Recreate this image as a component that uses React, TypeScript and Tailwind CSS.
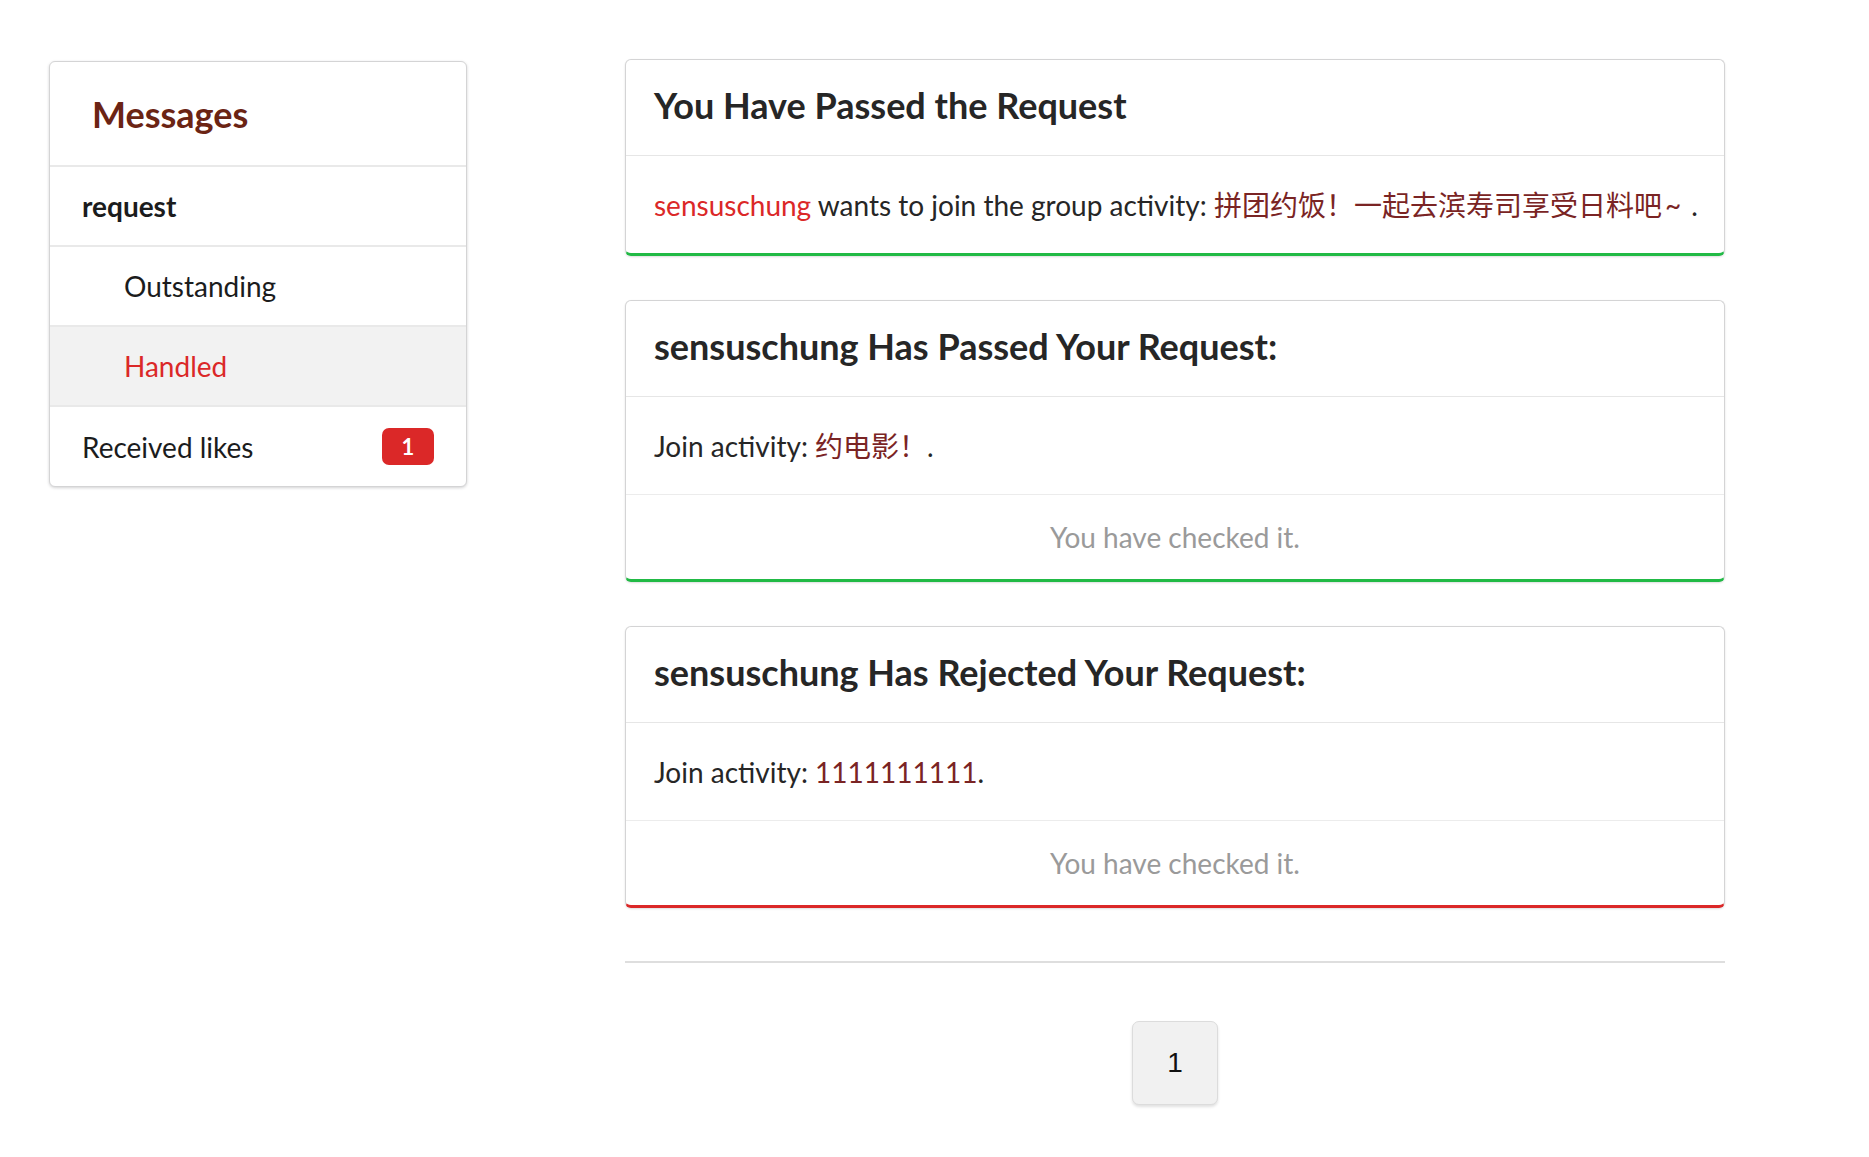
import React from 'react';

type Status = 'green' | 'red';

interface MessageCardProps {
  title: string;
  status: Status;
  children: React.ReactNode;
  checked?: boolean;
}

const font = { fontFamily: 'Lato, "Noto Sans CJK SC", sans-serif' };

const MessageCard: React.FC<MessageCardProps> = ({ title, status, children, checked }) => {
  const bottom = status === 'green' ? 'border-b-[#21ba45]' : 'border-b-[#db2828]';
  return (
    <div
      className={`bg-white border border-[#d4d4d5] border-b-[3px] ${bottom} rounded-[6px] shadow-[0_1px_2px_rgba(34,36,38,0.15)]`}
    >
      <div className="h-[96px] flex items-center px-[28px] pb-[6px] border-b border-[#e6e6e6]">
        <h2 className="text-[36px] font-bold text-[#262626] leading-none">{title}</h2>
      </div>
      <div className="h-[97px] flex items-center px-[28px] text-[28px] text-[#262626]">
        <p className="whitespace-nowrap">{children}</p>
      </div>
      {checked && (
        <div className="h-[85px] flex items-center justify-center border-t border-[#ececec] text-[28px] text-[#9a9a9a]">
          You have checked it.
        </div>
      )}
    </div>
  );
};

const Sidebar: React.FC = () => {
  return (
    <div className="w-[418px] mt-[2px] self-start bg-white border border-[#d4d4d5] rounded-[6px] shadow-[0_1px_3px_rgba(34,36,38,0.2)] overflow-hidden">
      <div className="h-[105px] flex items-center pl-[42px] border-b-2 border-[#e9e9e9]">
        <h1 className="text-[36px] font-bold text-[#6b2414] leading-none">Messages</h1>
      </div>
      <div className="h-[80px] flex items-center pl-[32px] border-b-2 border-[#e9e9e9] text-[28px] font-bold text-[#1b1c1d]">
        request
      </div>
      <div className="h-[80px] flex items-center pl-[74px] border-b-2 border-[#e9e9e9] text-[28px] text-[#1b1c1d]">
        Outstanding
      </div>
      <div className="h-[80px] flex items-center pl-[74px] border-b-2 border-[#e9e9e9] bg-[#f2f2f2] text-[28px] text-[#db2828]">
        Handled
      </div>
      <div className="h-[79px] flex items-center justify-between pl-[32px] pr-[32px] text-[28px] text-[#1b1c1d]">
        <span>Received likes</span>
        <span className="w-[52px] h-[37px] rounded-[7px] bg-[#db2828] text-white text-[22px] font-bold flex items-center justify-center">
          1
        </span>
      </div>
    </div>
  );
};

export default function App() {
  return (
    <div className="min-h-[1157px] bg-white" style={font}>
      <div className="flex pt-[59px] pl-[49px] gap-[158px]">
        <Sidebar />
        <div className="w-[1100px] flex flex-col">
          <div className="flex flex-col gap-[44px]">
            <MessageCard title="You Have Passed the Request" status="green">
              <span className="text-[#db2828]">sensuschung</span> wants to join the group activity:{' '}
              <span className="text-[#7a2424]">
                拼团约饭！一起去滨寿司享受日料吧
                <span className="inline-block w-[0.8em] text-center">~</span>
              </span>
              <span className="ml-[7px]">.</span>
            </MessageCard>
            <MessageCard title="sensuschung Has Passed Your Request:" status="green" checked>
              Join activity: <span className="text-[#7a2424]">约电影！</span>.
            </MessageCard>
            <MessageCard title="sensuschung Has Rejected Your Request:" status="red" checked>
              Join activity: <span className="text-[#7a2424]">1111111111</span>.
            </MessageCard>
          </div>
          <div className="mt-[53px] border-t-2 border-[#dedede]" />
          <div className="flex justify-center mt-[58px]">
            <button
              className="w-[86px] h-[84px] rounded-[7px] bg-[#f1f1f1] border border-[#dcdcdc] shadow-[0_2px_3px_rgba(0,0,0,0.12)] text-[28px] text-[#111]"
              style={{ fontFamily: '"Liberation Sans", sans-serif' }}
            >
              1
            </button>
          </div>
        </div>
      </div>
    </div>
  );
}
